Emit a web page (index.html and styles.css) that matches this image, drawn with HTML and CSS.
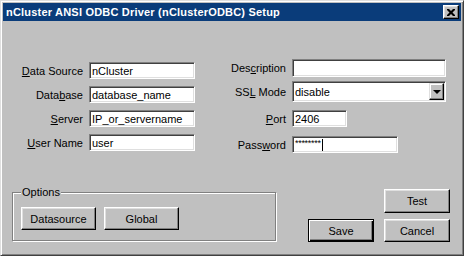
FILE: index.html
```html
<!DOCTYPE html>
<html lang="en">
<head>
    <meta charset="UTF-8">
    <meta name="viewport" content="width=device-width, initial-scale=1.0">
    <title>nCluster ANSI ODBC Driver (nClusterODBC) Setup</title>
    <link rel="stylesheet" href="styles.css">
</head>
<body>
    <div class="window">
        <div class="caption">
            <span class="caption-title">nCluster ANSI ODBC Driver (nClusterODBC) Setup</span>
            <div class="caption-close">
                <svg width="8" height="7" viewBox="0 0 8 7">
                    <path d="M0 0h2l2 2 2-2h2v1l-2.5 2.5L8 6v1H6L4 5 2 7H0V6l2.5-2.5L0 1z" fill="#000"/>
                </svg>
            </div>
        </div>

        <div class="dialog">
            <div class="fields">
                <div class="col col-left">
                    <div class="row">
                        <label class="lbl"><u>D</u>ata Source</label>
                        <div class="edit edit-mid">nCluster</div>
                    </div>
                    <div class="row">
                        <label class="lbl">Data<u>b</u>ase</label>
                        <div class="edit edit-mid">database_name</div>
                    </div>
                    <div class="row">
                        <label class="lbl"><u>S</u>erver</label>
                        <div class="edit edit-mid">IP_or_servername</div>
                    </div>
                    <div class="row">
                        <label class="lbl"><u>U</u>ser Name</label>
                        <div class="edit edit-mid">user</div>
                    </div>
                </div>

                <div class="col col-right">
                    <div class="row row-desc">
                        <label class="lbl">Des<u>c</u>ription</label>
                        <div class="edit edit-long"></div>
                    </div>
                    <div class="row row-ssl">
                        <label class="lbl">SS<u>L</u> Mode</label>
                        <div class="edit combo edit-long">
                            <span class="combo-text">disable</span>
                            <span class="combo-btn"><span class="arrow"></span></span>
                        </div>
                    </div>
                    <div class="row row-port">
                        <label class="lbl"><u>P</u>ort</label>
                        <div class="edit edit-short">2406</div>
                    </div>
                    <div class="row row-pass">
                        <label class="lbl">Pass<u>w</u>ord</label>
                        <div class="edit edit-mid"><span class="stars">********</span><span class="caret"></span></div>
                    </div>
                </div>
            </div>

            <div class="bottom">
                <div class="group">
                    <span class="group-title">Options</span>
                    <button class="btn btn-wide">Datasource</button>
                    <button class="btn btn-wide">Global</button>
                </div>
                <div class="actions">
                    <button class="btn btn-test">Test</button>
                    <button class="btn btn-default">Save</button>
                    <button class="btn">Cancel</button>
                </div>
            </div>
        </div>
    </div>
</body>
</html>
```

FILE: styles.css
```css
body {
    margin: 0;
    background-color: #c0c0c0;
    font-family: 'Liberation Sans', Arial, sans-serif;
    font-size: 11px;
    color: #000;
}
.window {
    width: 464px;
    height: 256px;
    box-sizing: border-box;
    border: 1px solid;
    border-color: #dfdfdf #404040 #404040 #dfdfdf;
    padding: 2px;
    box-shadow: inset 1px 1px 0 #fff, inset -1px -1px 0 #808080;
    background-color: #c0c0c0;
}
.caption {
    height: 18px;
    background-color: #0a3c7a;
    display: flex;
    align-items: center;
    justify-content: space-between;
    padding-left: 3px;
}
.caption-title {
    color: #fff;
    font-weight: bold;
    font-size: 11px;
    letter-spacing: 0.2px;
    white-space: nowrap;
}
.caption-close {
    width: 16px;
    height: 14px;
    box-sizing: border-box;
    margin-right: 2px;
    background-color: #c0c0c0;
    border: 1px solid;
    border-color: #fff #000 #000 #fff;
    box-shadow: inset -1px -1px 0 #808080, inset 1px 1px 0 #dfdfdf;
    display: flex;
    align-items: center;
    justify-content: center;
}
.caption-close svg {
    display: block;
    margin-left: -1px;
}
.dialog {
    padding: 0 11px 0 9px;
}
.fields {
    display: flex;
    margin-top: 38px;
}
.col {
    display: flex;
    flex-direction: column;
}
.col-left {
    padding-top: 3px;
    gap: 7px;
}
.col-right {
    margin-left: 31px;
}
.row {
    display: flex;
    align-items: center;
    height: 17px;
}
.col-left .lbl {
    width: 71px;
}
.col-right .lbl {
    width: 60px;
}
.lbl {
    text-align: right;
    white-space: nowrap;
    margin-right: 6px;
}
.row-desc {
    height: 18px;
}
.row-ssl {
    height: 21px;
    margin-top: 4px;
}
.row-port {
    margin-top: 8px;
}
.row-pass {
    margin-top: 9px;
}
.edit {
    height: 100%;
    box-sizing: border-box;
    background-color: #fff;
    border: 1px solid;
    border-color: #808080 #fff #fff #808080;
    box-shadow: inset 1px 1px 0 #404040, inset -1px -1px 0 #dfdfdf;
    padding-left: 2px;
    display: flex;
    align-items: center;
    white-space: nowrap;
}
.edit-mid {
    width: 106px;
}
.edit-long {
    width: 154px;
}
.edit-short {
    width: 55px;
}
.combo {
    padding: 1px;
    padding-left: 2px;
    justify-content: space-between;
    align-items: stretch;
}
.combo-text {
    display: flex;
    align-items: center;
}
.combo-btn {
    width: 15px;
    box-sizing: border-box;
    background-color: #c0c0c0;
    border: 1px solid;
    border-color: #dfdfdf #000 #000 #dfdfdf;
    box-shadow: inset -1px -1px 0 #808080, inset 1px 1px 0 #fff;
    display: flex;
    align-items: center;
    justify-content: center;
}
.arrow {
    width: 0;
    height: 0;
    border-left: 4px solid transparent;
    border-right: 4px solid transparent;
    border-top: 4px solid #000;
    margin-top: 1px;
}
.stars {
    font-size: 9px;
    letter-spacing: -0.3px;
    margin-top: -3px;
}
.caret {
    display: inline-block;
    width: 1px;
    height: 12px;
    background-color: #000;
    margin-left: 1px;
}
.bottom {
    display: flex;
    justify-content: space-between;
    align-items: flex-start;
    margin-top: 36px;
}
.group {
    position: relative;
    width: 264px;
    height: 49px;
    box-sizing: border-box;
    margin-top: 3px;
    border: 1px solid #808080;
    box-shadow: inset 1px 1px 0 #fff, 1px 1px 0 #fff;
    padding: 14px 0 0 8px;
    display: flex;
    align-items: flex-start;
    gap: 8px;
}
.group-title {
    position: absolute;
    top: -7px;
    left: 8px;
    padding: 0 1px;
    line-height: 13px;
    background-color: #c0c0c0;
}
.actions {
    display: grid;
    grid-template-columns: 66px 66px;
    grid-template-rows: 24px 23px;
    column-gap: 10px;
    row-gap: 6px;
}
.btn {
    width: 66px;
    height: 100%;
    box-sizing: border-box;
    padding: 0;
    font-family: 'Liberation Sans', Arial, sans-serif;
    font-size: 11px;
    color: #000;
    background-color: #c0c0c0;
    border: 1px solid;
    border-color: #fff #000 #000 #fff;
    box-shadow: inset -1px -1px 0 #808080, inset 1px 1px 0 #dfdfdf;
    border-radius: 0;
}
.btn-wide {
    width: 75px;
    height: 23px;
}
.btn-test {
    grid-column: 2;
}
.btn-default {
    border-color: #000;
    box-shadow: inset 1px 1px 0 #fff, inset -1px -1px 0 #000, inset -2px -2px 0 #808080;
}
```
